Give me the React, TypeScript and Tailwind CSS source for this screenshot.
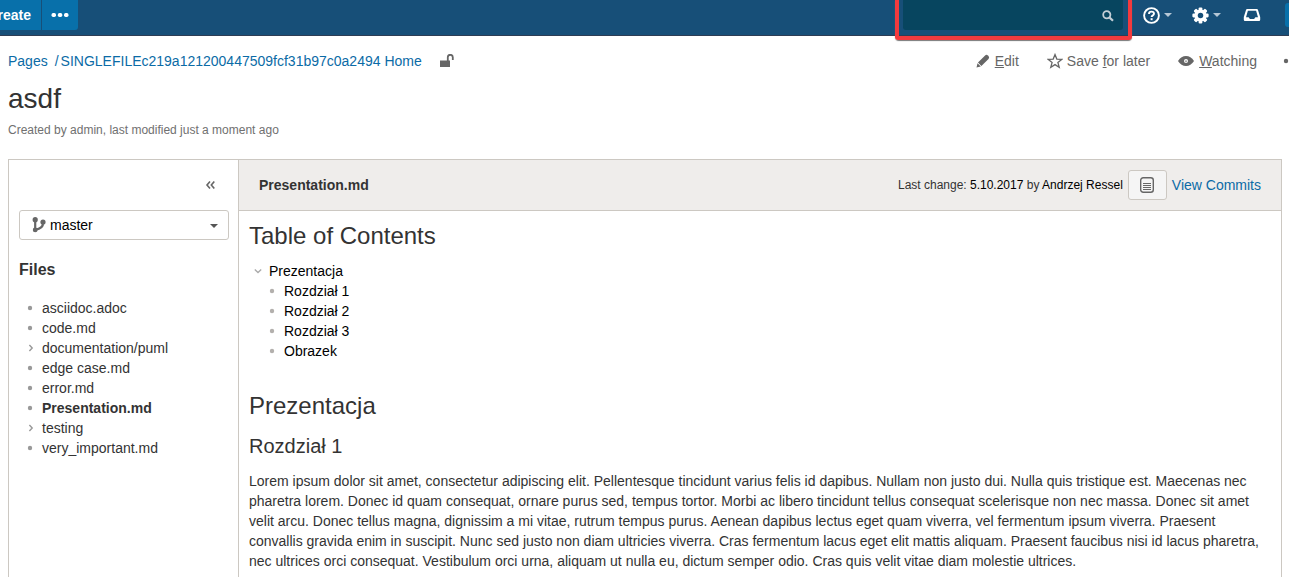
import React from "react";

const files: { name: string; folder?: boolean; current?: boolean }[] = [
  { name: "asciidoc.adoc" },
  { name: "code.md" },
  { name: "documentation/puml", folder: true },
  { name: "edge case.md" },
  { name: "error.md" },
  { name: "Presentation.md", current: true },
  { name: "testing", folder: true },
  { name: "very_important.md" },
];

const sections = ["Rozdział 1", "Rozdział 2", "Rozdział 3", "Obrazek"];

function Caret() {
  return (
    <svg width="8" height="4" viewBox="0 0 8 4" className="fill-current" aria-hidden="true">
      <path d="M0 0h8L4 4z" />
    </svg>
  );
}

function Chevron({ down = false }: { down?: boolean }) {
  return (
    <svg width="8" height="8" viewBox="0 0 8 8" fill="none" stroke="currentColor" strokeWidth="1.4" aria-hidden="true">
      <path d={down ? "M.8 2.5L4 5.5 7.2 2.5" : "M2.4 1L5.2 4 2.4 7"} />
    </svg>
  );
}

function Bullet() {
  return (
    <svg width="6" height="6" viewBox="0 0 6 6" className="fill-current" aria-hidden="true">
      <circle cx="3" cy="3" r="2.2" />
    </svg>
  );
}

function GearIcon() {
  return (
    <svg width="17" height="17" viewBox="0 0 18 18" aria-hidden="true">
      <g fill="#fff">
        {[0, 45, 90, 135].map((angle) => (
          <rect key={angle} x="7" y="0.4" width="4" height="17.2" rx="1.2" transform={`rotate(${angle} 9 9)`} />
        ))}
        <circle cx="9" cy="9" r="6.4" />
      </g>
      <circle cx="9" cy="9" r="2.9" fill="#174f78" />
    </svg>
  );
}

function TopBar() {
  return (
    <header className="flex h-9 items-start border-b border-[#2e3d54] bg-[#174f78] text-white">
      <button className="flex h-[30px] w-[41px] shrink-0 items-center justify-end overflow-hidden bg-[#0870aa] pr-2.5 font-bold">
        Create
      </button>
      <button aria-label="More" className="ml-px flex h-[30px] w-9 items-center justify-center rounded-br-[3px] bg-[#0870aa]">
        <svg width="18" height="4" viewBox="0 0 18 4" fill="#fff" aria-hidden="true">
          <rect x="0.5" width="4.500" height="4" rx="1.700" />
          <rect x="6.800" width="4.500" height="4" rx="1.700" />
          <rect x="13" width="4.500" height="4" rx="1.700" />
        </svg>
      </button>
      <div className="relative ml-auto w-[220px]">
        <input
          type="text"
          aria-label="Search"
          className="block h-[30px] w-full rounded-b-[3px] bg-[#07455f] pr-7 pl-2 outline-none"
        />
        <svg width="12" height="12" viewBox="0 0 12 12" fill="none" stroke="#c3ced6" className="absolute top-[10px] right-[9px]" aria-hidden="true">
          <circle cx="4.8" cy="4.8" r="3.6" strokeWidth="1.8" />
          <path d="M7.6 7.6l3.4 3.2" strokeWidth="2.2" />
        </svg>
        <div className="pointer-events-none absolute top-0 -right-[9px] -bottom-[10px] -left-2 rounded-b-[4px] border-4 border-t-0 border-[#f33a3e] shadow-[0_1px_1px_#777]" />
      </div>
      <nav className="ml-5 flex h-[30px] items-center">
        <button aria-label="Help" className="flex items-center gap-1 text-[#b5c7d6]">
          <svg width="17" height="17" viewBox="0 0 17 17" fill="none" stroke="#fff" aria-hidden="true">
            <circle cx="8.5" cy="8.5" r="7.4" strokeWidth="1.9" />
            <path d="M6 6.9C6 5.3 7 4.6 8.5 4.6s2.5.8 2.5 2.1c0 1.7-2.4 1.6-2.4 3.3" strokeWidth="1.9" />
            <path d="M8.6 11.2v2" strokeWidth="2" />
          </svg>
          <Caret />
        </button>
        <button aria-label="Settings" className="ml-5 flex items-center gap-1 text-[#b5c7d6]">
          <GearIcon />
          <Caret />
        </button>
        <button aria-label="Notifications" className="ml-[22px]">
          <svg width="18" height="14" viewBox="0 0 18 14" aria-hidden="true">
            <path
              fill="#fff"
              fillRule="evenodd"
              d="M4.2 1h9.6q1 0 1.200 1l2.200 7v2.800q0 1.200-1.200 1.200H2Q.8 13 .8 11.800V9L3 2q.2-1 1.200-1zM4.900 2.700L3 9.300h2.600l1.300 1.600h4.200l1.300-1.600H15l-1.900-6.600z"
            />
          </svg>
        </button>
        <button aria-label="Profile" className="ml-6 h-6 w-1 rounded-l-[3px] bg-[#0870aa]" />
      </nav>
    </header>
  );
}

function PageHeading() {
  return (
    <>
      <div className="mt-[15px] flex h-5 items-center text-[#0b6ba6]">
        <nav aria-label="Breadcrumb" className="flex">
          <a href="#pages">Pages</a>
          <span className="ml-[7px]">/</span>
          <a href="#home" className="ml-0.5">SINGLEFILEc219a121200447509fcf31b97c0a2494 Home</a>
        </nav>
        <svg width="14" height="14" viewBox="0 0 14 14" className="ml-[18px]" aria-label="Unrestricted">
          <path d="M0 6.500h10v6.500H0z" fill="#666" />
          <path d="M7.800 7V3.200Q7.800.8 10.300.8t2.500 2.400V6" fill="none" stroke="#666" strokeWidth="1.800" />
        </svg>
        <div className="ml-auto flex items-center text-[#666]">
          <a href="#edit" className="flex items-center gap-[5px]">
            <svg width="14" height="14" viewBox="0 0 14 14" fill="#666" aria-hidden="true">
              <path d="M.5 13.500l1-4.300 3.300 3.300zM2 8.500L9.100 1.400Q10.500.2 12 1.500l.5.5q1.300 1.400 0 2.900l-7.100 7.100z" />
            </svg>
            <span><u>E</u>dit</span>
          </a>
          <a href="#save" className="ml-7 flex items-center gap-1">
            <svg width="16" height="16" viewBox="0 0 16 16" fill="none" stroke="#666" strokeWidth="1.3" aria-hidden="true">
              <path d="M8 1.600l1.800 4.500 4.900.3-3.800 3.100 1.300 4.700L8 11.600l-4.200 2.600 1.300-4.700L1.300 6.400l4.900-.3z" />
            </svg>
            <span>Save <u>f</u>or later</span>
          </a>
          <a href="#watch" className="ml-7 flex items-center gap-[5px]">
            <svg width="16" height="10" viewBox="0 0 16 10" aria-hidden="true">
              <path d="M0 5Q3.200 0 8 0t8 5q-3.200 5-8 5T0 5z" fill="#666" />
              <circle cx="8" cy="5" r="2" fill="#fff" />
              <circle cx="8" cy="5.300" r="1" fill="#666" opacity=".6" />
            </svg>
            <span><u>W</u>atching</span>
          </a>
          <button aria-label="More actions" className="-mr-[7px] ml-[26px] flex items-center">
            <Bullet />
          </button>
        </div>
      </div>
      <h1 className="mt-[10px] text-[28px] leading-9">asdf</h1>
      <p className="mt-[3px] text-xs leading-5 text-[#707070]">Created by admin, last modified just a moment ago</p>
    </>
  );
}

function Sidebar() {
  return (
    <aside className="w-[230px] shrink-0 border-r border-[#ccc8c2] px-2.5">
      <div className="flex h-[50px] items-center justify-end pr-3">
        <button aria-label="Collapse sidebar" className="text-[#666]">
          <svg width="11" height="10" viewBox="0 0 11 10" fill="none" stroke="currentColor" strokeWidth="1.6" aria-hidden="true">
            <path d="M5 1.400L2 5l3 3.600M9.300 1.400L6.300 5l3 3.600" />
          </svg>
        </button>
      </div>
      <div className="relative -mr-px">
        <select
          aria-label="Branch"
          className="block h-[30px] w-full appearance-none rounded-[3px] border border-[#ccc8c2] bg-white pr-6 pl-[30px] text-black"
        >
          <option>master</option>
        </select>
        <svg width="14" height="16" viewBox="0 0 14 16" className="pointer-events-none absolute top-[7px] left-[13px]" aria-hidden="true">
          <path d="M3.200 3v10M3.200 12.800C8 12 11.300 9.500 11 5.500" fill="none" stroke="#666" strokeWidth="2.200" />
          <circle cx="3.200" cy="2.700" r="2.600" fill="#666" />
          <circle cx="3.200" cy="12.900" r="2.400" fill="#666" />
          <circle cx="11" cy="5" r="2.600" fill="#666" />
        </svg>
        <span className="pointer-events-none absolute top-[14px] right-[11px] text-[#555]">
          <Caret />
        </span>
      </div>
      <h2 className="mt-5 text-base leading-5 font-bold">Files</h2>
      <ul className="mt-[18px]">
        {files.map((file) => (
          <li key={file.name} className="flex items-center">
            <span className="flex w-[23px] pl-2 text-[#999]">{file.folder ? <Chevron /> : <Bullet />}</span>
            <a href="#file" className={file.current ? "font-bold" : ""}>{file.name}</a>
          </li>
        ))}
      </ul>
    </aside>
  );
}

function Document() {
  return (
    <main className="min-w-0 flex-1">
      <div className="flex h-[51px] items-center border-b border-[#ccc8c2] bg-[#efedeb] px-5">
        <strong>Presentation.md</strong>
        <span className="ml-auto text-xs text-black">
          <span className="text-[#333]">Last change:</span> 5.10.2017 <span className="text-[#333]">by</span> Andrzej Ressel
        </span>
        <button
          aria-label="Show source"
          className="ml-[5px] flex h-[30px] w-[39px] items-center justify-center rounded-[3px] border border-[#ccc8c2] bg-[#f5f5f5]"
        >
          <svg width="14" height="16" viewBox="0 0 14 16" fill="none" stroke="#666" aria-hidden="true">
            <rect x="0.700" y="0.700" width="12.600" height="14.600" rx="2.500" strokeWidth="1.400" />
            <path d="M3 6.500h8M3 8.500h8M3 10.500h8M3 12.500h8" />
          </svg>
        </button>
        <a href="#commits" className="ml-[5px] text-[#0b6ba6]">View Commits</a>
      </div>
      <article className="p-2.5">
        <h1 className="text-2xl leading-[30px]">Table of Contents</h1>
        <ul className="mt-2.5 text-black">
          <li>
            <div className="flex items-center">
              <span className="flex w-5 pl-[5px] text-[#aaa]"><Chevron down /></span>
              <a href="#prezentacja">Prezentacja</a>
            </div>
            <ul className="pl-3">
              {sections.map((section) => (
                <li key={section} className="flex items-center">
                  <span className="flex w-[23px] pl-2 text-[#b3b0ad]"><Bullet /></span>
                  <a href="#section">{section}</a>
                </li>
              ))}
            </ul>
          </li>
        </ul>
        <h1 className="mt-[30px] text-2xl leading-[30px]">Prezentacja</h1>
        <h2 className="mt-2.5 text-xl leading-[30px]">Rozdział 1</h2>
        <p className="mt-2.5">
          Lorem ipsum dolor sit amet, consectetur adipiscing elit. Pellentesque tincidunt varius felis id dapibus. Nullam
          non justo dui. Nulla quis tristique est. Maecenas nec pharetra lorem. Donec id quam consequat, ornare purus sed,
          tempus tortor. Morbi ac libero tincidunt tellus consequat scelerisque non nec massa. Donec sit amet velit arcu.
          Donec tellus magna, dignissim a mi vitae, rutrum tempus purus. Aenean dapibus lectus eget quam viverra, vel
          fermentum ipsum viverra. Praesent convallis gravida enim in suscipit. Nunc sed justo non diam ultricies viverra.
          Cras fermentum lacus eget elit mattis aliquam. Praesent faucibus nisi id lacus pharetra, nec ultrices orci
          consequat. Vestibulum orci urna, aliquam ut nulla eu, dictum semper odio. Cras quis velit vitae diam molestie
          ultrices.
        </p>
      </article>
    </main>
  );
}

export default function App() {
  return (
    <div className="flex min-h-screen flex-col bg-white font-['Liberation_Sans',Arial,sans-serif] text-sm leading-5 text-[#333]">
      <TopBar />
      <div className="flex flex-1 flex-col pr-[7px] pl-2">
        <PageHeading />
        <div className="mt-[19px] flex flex-1 border border-b-0 border-[#ccc8c2]">
          <Sidebar />
          <Document />
        </div>
      </div>
    </div>
  );
}
